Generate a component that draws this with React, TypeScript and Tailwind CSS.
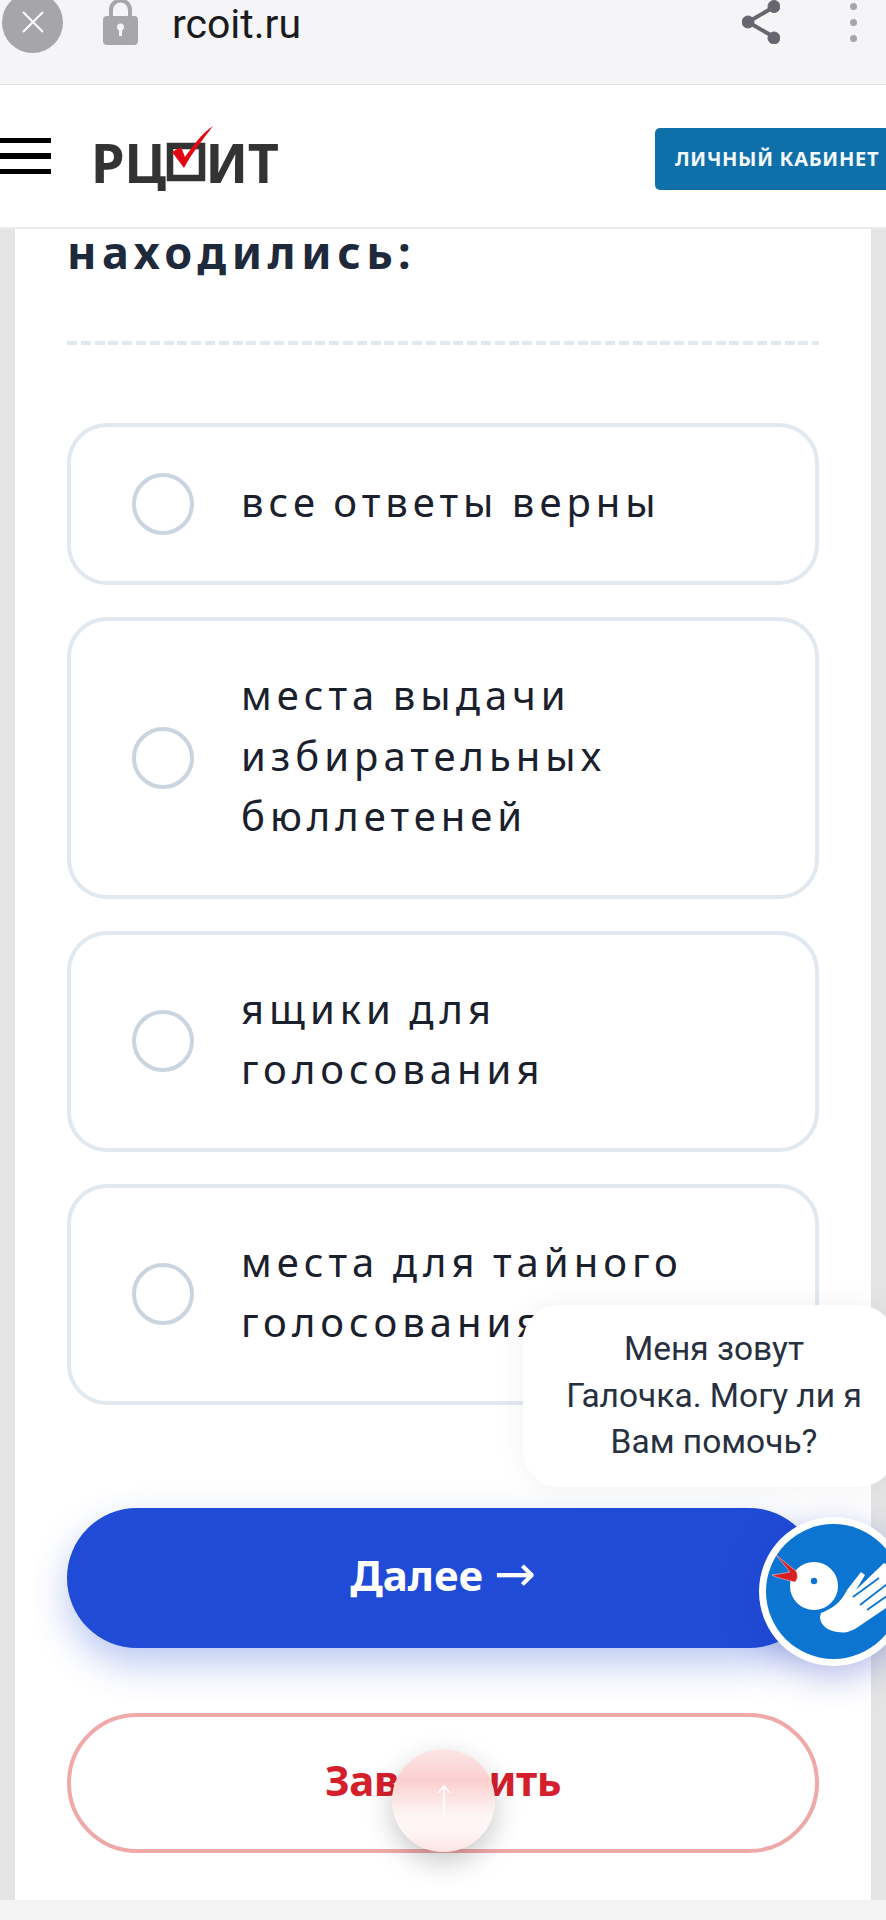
const options = [
  { id: 1, text: ["все ответы верны"] },
  { id: 2, text: ["места выдачи", "избирательных", "бюллетеней"] },
  { id: 3, text: ["ящики для", "голосования"] },
  { id: 4, text: ["места для тайного", "голосования"] },
];

function BrowserBar() {
  return (
    <div className="h-[85px] overflow-hidden border-b border-[#dedee0] bg-[#f5f5f7]">
      <div className="flex h-[44px] items-center">
        <div className="ml-[2px] flex h-[61px] w-[61px] shrink-0 items-center justify-center rounded-full bg-[#a5a5aa]">
          <svg width="22" height="22" viewBox="0 0 22 22" fill="none" stroke="#fff" strokeWidth="2">
            <path d="M1 1l20 20M21 1L1 21" />
          </svg>
        </div>
        <svg className="ml-[40px] shrink-0" width="35" height="48" viewBox="0 0 35 48">
          <path d="M8 20V12a9.500 9.500 0 0 1 19 0v8" fill="none" stroke="#a6a6ab" strokeWidth="4" />
          <rect x="0" y="18" width="35" height="29" rx="4" fill="#a6a6ab" />
          <circle cx="17.500" cy="29" r="3.500" fill="#f5f5f7" />
          <rect x="16" y="30" width="3" height="8" fill="#f5f5f7" />
        </svg>
        <span className="ml-[34px] mt-[5px] font-['Roboto',sans-serif] text-[41px] leading-none text-[#1b1b1d]">rcoit.ru</span>
        <svg className="ml-auto shrink-0" width="38" height="44" viewBox="0 0 38 44" fill="#66666e" stroke="#66666e">
          <path d="M32 7L6 22l26 15" fill="none" strokeWidth="4" />
          <circle cx="32" cy="6.500" r="6" />
          <circle cx="6" cy="22" r="6" />
          <circle cx="32" cy="38" r="6" />
        </svg>
        <div className="ml-[70px] mr-[29px] flex flex-col gap-[9px]">
          <span className="h-[7px] w-[7px] rounded-full bg-[#a6a6a8]" />
          <span className="h-[7px] w-[7px] rounded-full bg-[#a6a6a8]" />
          <span className="h-[7px] w-[7px] rounded-full bg-[#a6a6a8]" />
        </div>
      </div>
    </div>
  );
}

function Logo() {
  return (
    <div className="ml-[40px] mt-[6px] flex items-center font-['Noto_Sans',sans-serif] text-[54px] font-bold leading-none tracking-[-0.500px] text-[#333333]">
      <span>РЦ</span>
      <svg className="mx-[1px] shrink-0 overflow-visible" width="38" height="38" viewBox="0 0 38 38">
        <rect x="3" y="3" width="32" height="32" fill="none" stroke="#333333" strokeWidth="6.500" />
        <path d="M5 9L14 4L18 14C26 3 35 -10 46 -17C38 -6 26 8 17 25z" fill="#e30613" />
      </svg>
      <span>ИТ</span>
    </div>
  );
}

function Header() {
  return (
    <header className="flex h-[144px] items-center border-b-2 border-[#ececec] bg-white pt-[6px]">
      <div className="mb-[6px] flex flex-col gap-[10px]">
        <span className="h-[5.500px] w-[51px] bg-black" />
        <span className="h-[5.500px] w-[51px] bg-black" />
        <span className="h-[5.500px] w-[51px] bg-black" />
      </div>
      <Logo />
      <button className="ml-auto h-[62px] w-[231px] rounded-l-[5px] bg-[#0f6fa9] pl-[20px] text-left font-['Noto_Sans',sans-serif] text-[20px] font-bold tracking-[0.7px] text-[#f2f7fb]">
        ЛИЧНЫЙ КАБИНЕТ
      </button>
    </header>
  );
}

function Option({ text }: { text: string[] }) {
  return (
    <label className="flex items-center rounded-[40px] border-4 border-[#e2e8f0] bg-white py-[46px] pl-[61px]">
      <span className="h-[62px] w-[62px] shrink-0 rounded-full border-[4px] border-[#cbd5e0]" />
      <span className="ml-[47px] -translate-y-[2px] font-['Noto_Sans',sans-serif] text-[40px] leading-[60.500px] tracking-[5px] [word-spacing:-2px] text-[#1a202c]">
        {text.map((line) => (
          <span key={line} className="block">
            {line}
          </span>
        ))}
      </span>
    </label>
  );
}

function HelperAvatar() {
  return (
    <div className="absolute left-[759px] top-[1517px] h-[149px] w-[149px] rounded-full bg-white shadow-[0_10px_35px_rgba(40,60,190,0.35)]">
      <svg width="149" height="149" viewBox="0 0 149 149">
        <circle cx="74.500" cy="74.500" r="67.500" fill="#0b75d1" />
        <path d="M62 96C72 92 82 86 88 73L102 55L106 58L97 73L125 46L131 50L149 40V76L99 110C90 116 84 116 79 115C68 114 58 106 62 96z" fill="#fff" />
        <path d="M94 80L120 61M101 88L128 67M108 93L128 79" stroke="#0b75d1" strokeWidth="1.800" fill="none" />
        <circle cx="55" cy="69" r="25" fill="#fff" stroke="#0b75d1" strokeWidth="2" />
        <circle cx="55" cy="64" r="3.200" fill="#0b75d1" />
        <path d="M17 38L37 54C39 58 39 62 36 65C28 63 18 61 13 58C20 57 26 56 31 55z" fill="#d81e25" stroke="#f3c8c8" strokeWidth="0.600" />
      </svg>
    </div>
  );
}

export default function App() {
  return (
    <div className="relative h-[1920px] w-[886px] overflow-hidden bg-[#f3f3f3]">
      <BrowserBar />
      <Header />
      <main className="h-[1671px] border-x-[15px] border-x-[#e4e4e4] bg-white px-[52px]">
        <h2 className="font-['Noto_Sans',sans-serif] text-[45px] font-bold leading-[46px] tracking-[5.600px] text-[#1e293b]">
          находились:
        </h2>
        <div className="mt-[66px] h-[4px] w-full bg-[repeating-linear-gradient(90deg,#e2e8f0_0,#e2e8f0_10px,transparent_10px,transparent_13.800px)]" />
        <div className="mt-[78px] flex flex-col gap-[32px]">
          {options.map((option) => (
            <Option key={option.id} text={option.text} />
          ))}
        </div>
        <button className="mt-[103px] h-[140px] w-full rounded-full bg-[#1f4bd6] pb-[6px] font-['Noto_Sans',sans-serif] text-[42px] font-bold text-white shadow-[0_16px_36px_rgba(31,75,214,0.3)]">
          Далее <span className="font-['DejaVu_Sans',sans-serif] text-[50px] font-normal leading-none">→</span>
        </button>
        <button className="mt-[65px] h-[140px] w-full rounded-full border-4 border-[#efa9a9] bg-white pb-[6px] font-['Noto_Sans',sans-serif] text-[42px] font-bold tracking-[-0.500px] text-[#d5202c]">
          Завершить
        </button>
      </main>

      <div className="absolute left-[523px] top-[1305px] w-[372px] rounded-[36px] bg-white py-[21px] pl-[10px] text-center font-['Roboto',sans-serif] text-[33.500px] leading-[46.500px] text-[#27303f] shadow-[0_0_30px_rgba(0,0,0,0.06)]">
        <span className="block">Меня зовут</span>
        <span className="block">Галочка. Могу ли я</span>
        <span className="block">Вам помочь?</span>
      </div>
      <HelperAvatar />
      <div className="absolute left-[392px] top-[1749px] flex h-[103px] w-[103px] items-center justify-center rounded-full bg-[linear-gradient(180deg,#fbe6e6_0%,#fccfcf_30%,#fdf3f3_62%,#fff7f7_78%,#fde4e4_100%)] shadow-[0_10px_28px_rgba(0,0,0,0.22)]">
        <svg width="14" height="32" viewBox="0 0 14 32" fill="none" stroke="#fff" strokeWidth="1.500">
          <path d="M7 32V1M1 8l6-7 6 7" />
        </svg>
      </div>
    </div>
  );
}
